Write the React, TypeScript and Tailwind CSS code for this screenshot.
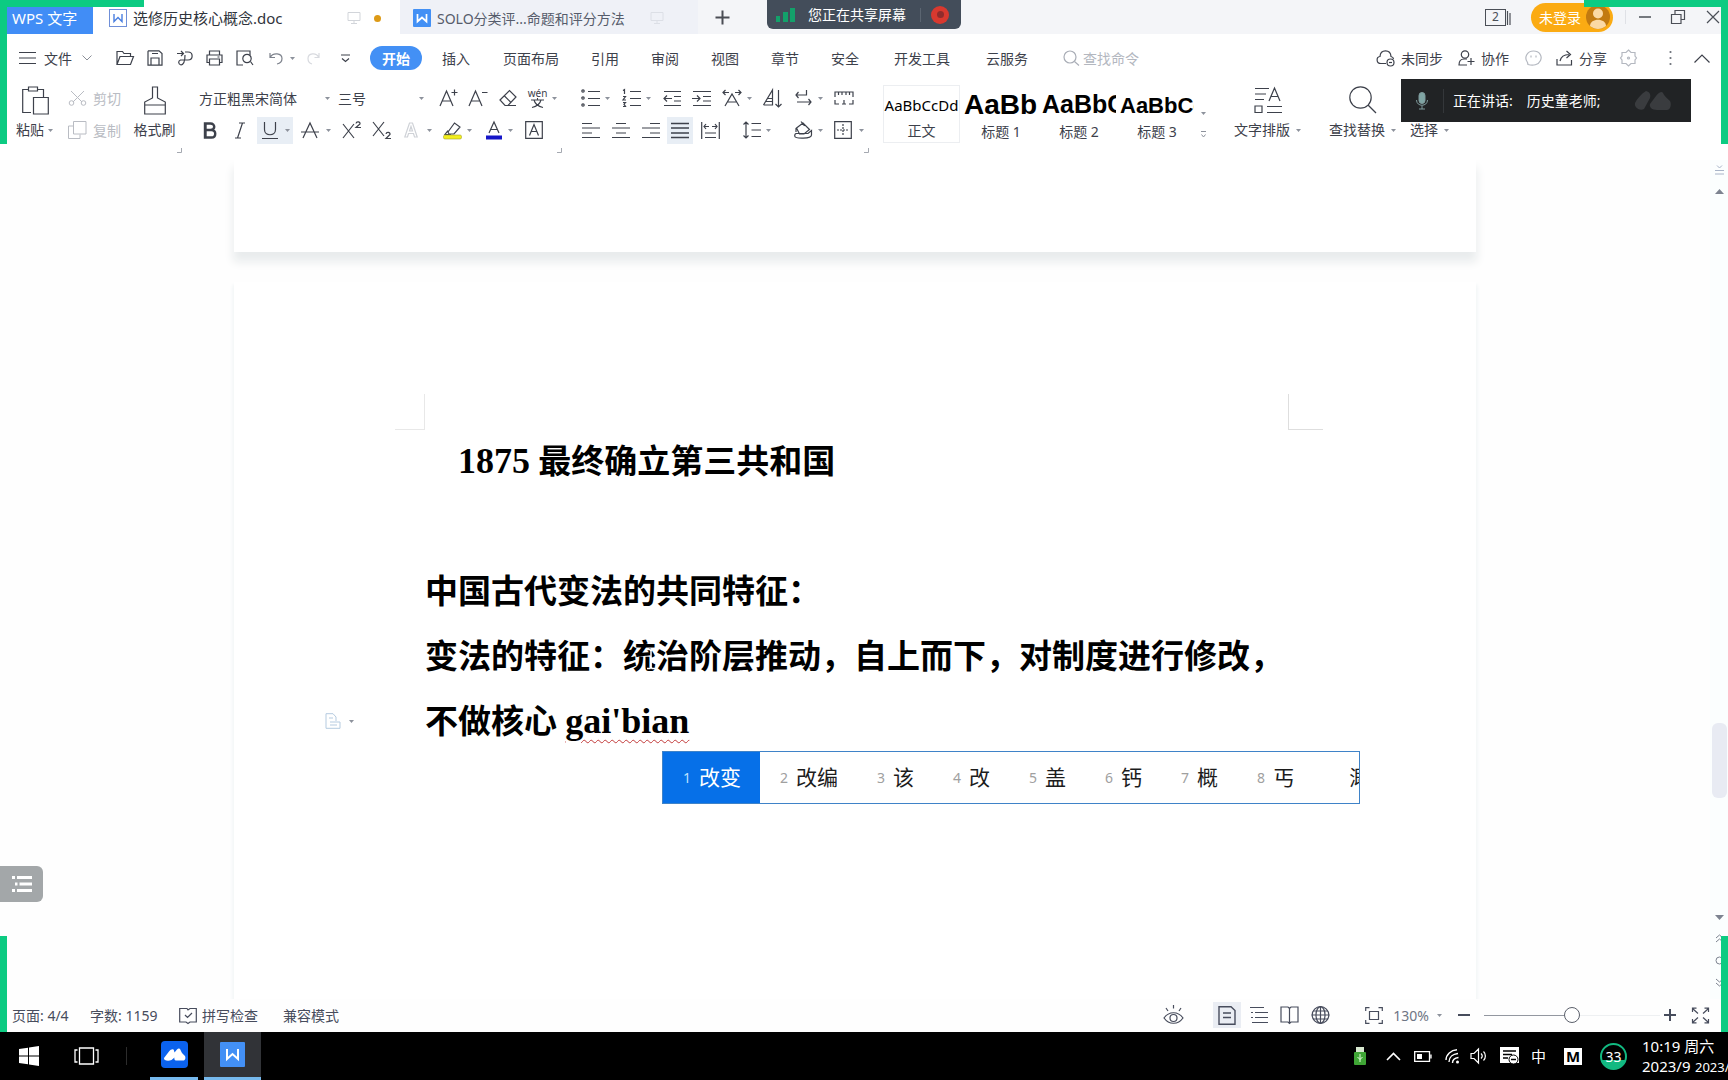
import React from "react";

const UI = "font-['Noto_Sans','Noto_Sans_CJK_SC',sans-serif]";

type IconProps = {
  w: number;
  h?: number;
  d?: string;
  sw?: number;
  fill?: string;
  className?: string;
  children?: React.ReactNode;
};

function Icon({ w, h = 20, d, sw = 1.2, fill = "none", className = "", children }: IconProps) {
  return (
    <svg
      width={w}
      height={h}
      viewBox={`0 0 ${w} ${h}`}
      fill={fill}
      stroke="currentColor"
      strokeWidth={sw}
      className={`block shrink-0 overflow-visible ${className}`}
      aria-hidden="true"
    >
      {d && <path d={d} />}
      {children}
    </svg>
  );
}

function Caret({ className = "" }: { className?: string }) {
  return (
    <svg width="5" height="3" viewBox="0 0 5 3" className={`block shrink-0 text-[#8d929c] ${className}`} aria-hidden="true">
      <path d="M0 0H5L2.500 3Z" fill="currentColor" />
    </svg>
  );
}

type ToolProps = { label: string; className?: string; caret?: string; children: React.ReactNode };

function Tool({ label, className = "", caret, children }: ToolProps) {
  return (
    <button type="button" aria-label={label} className={`flex shrink-0 items-center ${className}`}>
      {children}
      {caret && <Caret className={caret} />}
    </button>
  );
}

function WLogo({ className = "" }: { className?: string }) {
  return (
    <svg width="18" height="18" viewBox="0 0 18 18" className={`block shrink-0 ${className}`} aria-hidden="true">
      <rect width="18" height="18" rx="1" fill="#4390f5" />
      <path d="M4.500 5V12.500L9 8.500L13.500 12.500V5" fill="none" stroke="#fff" strokeWidth="1.700" />
    </svg>
  );
}

function Monitor({ className = "" }: { className?: string }) {
  return <Icon w={14} h={14} className={className} d="M1 1.500H13V9.500H1ZM7 9.500V12.500M4 12.500H10" sw={1} />;
}

function TitleBar() {
  return (
    <div className="relative flex h-[34px] items-center justify-between bg-[#f4f5f8]">
      <div className="flex h-full items-center">
        <button type="button" className="flex h-full w-[93px] items-center bg-[#418df6] pt-0.5 pl-3 text-[15px] text-white">
          WPS 文字
        </button>
        <div className="flex h-full w-[307px] items-center bg-white pt-0.5 pl-4">
          <Icon w={18} h={18} className="text-[#6f8fd8]" sw={1}>
            <rect x="0.500" y="0.500" width="17" height="17" />
            <path d="M5 5V12.500L9 8.500L13 12.500V5" stroke="#4a7fe0" strokeWidth="1.400" />
          </Icon>
          <span className="ml-1.5 w-[214px] text-[15px] text-[#30343c]">选修历史核心概念.doc</span>
          <Monitor className="text-[#d2d5da]" />
          <span className="ml-[13px] size-[7px] rounded-full bg-[#dd9a16]" />
        </div>
        <div className="flex h-full w-[298px] items-center bg-[#eff1f7] pt-0.5 pl-[13px]">
          <WLogo />
          <span className="ml-1.5 w-[213px] text-[14px] text-[#565c6b]">SOLO分类评...命题和评分方法</span>
          <Monitor className="text-[#dcdfe6]" />
        </div>
        <button type="button" aria-label="新建" className="ml-[17px]">
          <Icon w={15} h={15} d="M7.500 0.500V14.500M0.500 7.500H14.500" sw={2} className="text-[#4a4d54]" />
        </button>
      </div>

      <div className="absolute top-0 left-1/2 flex h-[29px] w-[194px] -translate-x-1/2 items-center rounded-b-md bg-[#434d5a] pl-[9px]">
        <Icon w={20} h={16} sw={0} className="text-[#13a06a]">
          <rect x="0" y="9" width="4" height="6" fill="currentColor" />
          <rect x="7" y="5" width="5" height="10" fill="currentColor" />
          <rect x="14" y="1" width="5" height="14" fill="currentColor" />
        </Icon>
        <span className="ml-3 text-[14px] text-white">您正在共享屏幕</span>
        <span className="ml-3.5 h-3.5 w-px bg-[#5b6571]" />
        <span className="ml-2.5 flex size-[18px] items-center justify-center rounded-full bg-[#d8392f]">
          <span className="size-[7px] rounded-sm bg-[#8f2c2c]" />
        </span>
      </div>

      <div className="flex items-center pr-2 text-[#4b4f57]">
        <button type="button" aria-label="窗口数 2" className="flex items-center">
          <span className="flex h-[17px] w-[21px] items-center justify-center border border-[#4b4f57] text-[12px] leading-none">2</span>
          <Icon w={5} h={17} d="M1.500 2V16M4 4V16" sw={1.2} />
        </button>
        <button type="button" className="ml-5 flex h-[29px] w-[82px] items-center justify-between rounded-full bg-[#fbab13] pr-0.5 pl-2 text-[14px] text-white">
          未登录
          <Icon w={26} h={26} sw={0}>
            <circle cx="13" cy="13" r="12" fill="#c27a10" />
            <circle cx="13" cy="9.500" r="5" fill="#fbd9a4" />
            <path d="M5 22C5 13.500 21 13.500 21 22C16 26 10 26 5 22Z" fill="#fbd9a4" />
          </Icon>
        </button>
        <span className="ml-3 h-3.5 w-px bg-[#dfe1e6]" />
        <button type="button" aria-label="最小化" className="ml-[13px]">
          <Icon w={12} h={14} d="M0 7H12" sw={1.5} />
        </button>
        <button type="button" aria-label="还原" className="ml-5">
          <Icon w={14} h={14} d="M0.500 4.500H10V13.500H0.500ZM4 4.500V0.500H13.500V9.500H10" />
        </button>
        <button type="button" aria-label="关闭" className="ml-[21px]">
          <Icon w={14} h={14} d="M1 1L13 13M13 1L1 13" />
        </button>
      </div>
    </div>
  );
}

const TABS: [string, string][] = [
  ["插入", "ml-5"],
  ["页面布局", "ml-[33px]"],
  ["引用", "ml-8"],
  ["审阅", "ml-8"],
  ["视图", "ml-8"],
  ["章节", "ml-8"],
  ["安全", "ml-8"],
  ["开发工具", "ml-[35px]"],
  ["云服务", "ml-9"],
];

function MenuRow() {
  return (
    <nav className="flex h-12 items-center justify-between bg-white pr-[18px] pl-[19px] text-[14px] text-[#3d414b]">
      <div className="flex items-center">
        <button type="button" className="flex items-center">
          <Icon w={17} h={14} d="M0 1.500H17M0 7H17M0 12.500H17" />
          <span className="mr-2.5 ml-2">文件</span>
          <Icon w={10} h={6} d="M0.500 0.500L5 5L9.500 0.500" sw={1} className="text-[#8b8f98]" />
        </button>
        <Tool label="打开" className="ml-6">
          <Icon w={18} h={16} d="M1 14.500V1.500H6.500L8 3.500H14.500V6M1 14.500L4 6.500H17.500L14.500 14.500H1Z" />
        </Tool>
        <Tool label="保存" className="ml-[13px]">
          <Icon w={16} h={16} d="M1.500 0.800H12L15 3.500V15.200H1V1.500ZM4 15V8H12V15M5 3.500H11" />
        </Tool>
        <Tool label="输出为PDF" className="ml-3.5">
          <Icon w={16} h={16} d="M0 3.500H6M4 1L6.500 3.500L4 6M8 2H11C16.500 2 16.500 10 11 10H3.500C1 11 1 14 4 15C7 14.500 8 12 8 5" />
        </Tool>
        <Tool label="打印" className="ml-[13px]">
          <Icon w={17} h={16} d="M3.500 5V1H13.500V5M3.500 12.500H1V5H16V12.500H13.500M3.500 9H13.500V15H3.500ZM11.500 7H13.500" />
        </Tool>
        <Tool label="打印预览" className="ml-[13px]">
          <Icon w={18} h={16} d="M7 15H1V1H14V5M14.500 11.500L17 15">
            <circle cx="11" cy="8.500" r="4.200" />
          </Icon>
        </Tool>
        <Tool label="撤销" className="ml-[15px] text-[#7d828c]" caret="ml-[7px]">
          <Icon w={14} h={14} d="M1 2V6.500H6M1 6.500C4 1 13 2 13 7.500C13 10.500 10.500 12.500 8 13" />
        </Tool>
        <Tool label="恢复" className="ml-3 text-[#d8dadf]">
          <Icon w={13} h={14} d="M12 2V6.500H7.500M12 6.500C9 1 1 2 1 7.500C1 10.500 3 12.500 5 13" />
        </Tool>
        <Tool label="更多" className="ml-[21px]">
          <Icon w={9} h={9} d="M0 1H9M1 4.500L4.500 7.500L8 4.500" />
        </Tool>
        <button type="button" className="ml-5 flex h-6 w-[52px] items-center justify-center rounded-full bg-[#4390f5] font-bold text-white">
          开始
        </button>
        {TABS.map(([t, m]) => (
          <button key={t} type="button" className={`whitespace-nowrap ${m}`}>
            {t}
          </button>
        ))}
        <label className="ml-[35px] flex items-center text-[#a9adb6]">
          <Icon w={17} h={16} d="M11.500 11.500L16 15.500">
            <circle cx="7" cy="7" r="6" />
          </Icon>
          <input aria-label="查找命令" placeholder="查找命令" className="ml-[3px] w-20 bg-transparent outline-none placeholder:text-[#b3b7bf]" />
        </label>
      </div>
      <div className="flex items-center">
        <button type="button" className="flex items-center gap-1.5">
          <Icon w={19} h={18} d="M10 14.500H5C0 14.500 0 8 4 7.500C4.500 0 14.500 0 15 7.500C16.500 8 17.500 9 17.500 10">
            <circle cx="14.500" cy="13.500" r="3.500" />
            <path d="M13 13.500H16" />
          </Icon>
          未同步
        </button>
        <button type="button" className="ml-[15px] flex items-center gap-1.5">
          <Icon w={17} h={16} d="M9 15H1C1 11 3 9 6 9H9M9.500 11.500H16.500M13 8V15">
            <circle cx="7" cy="4.500" r="3.700" />
          </Icon>
          协作
        </button>
        <Tool label="反馈" className="ml-4 text-[#b4b8c0]">
          <Icon w={17} h={17} d="M3 14.500L2.500 12.500C-1.500 7 2.500 1 8.500 1C14.500 1 17.500 6 15.500 10.500C13.500 15 8 16 3 14.500ZM6 5.500V7.500M11 5.500V7.500" />
        </Tool>
        <button type="button" className="ml-3.5 flex items-center gap-1.5">
          <Icon w={17} h={16} d="M1 9V15H15.500V10M4 11C5 6.500 8 4.500 13 4.500M10.500 1L14.500 4.500L10.500 8" />
          分享
        </button>
        <Tool label="设置" className="ml-[13px] text-[#b4b8c0]">
          <Icon w={17} h={18} d="M8.500 1L11 3.500L15 3.500L15 7L16.500 9L15 11L15 14.500L11 14.500L8.500 17L6 14.500L2 14.500L2 11L0.500 9L2 7L2 3.500L6 3.500Z">
            <circle cx="8.500" cy="9" r="1" />
          </Icon>
        </Tool>
        <Tool label="更多选项" className="ml-8 text-[#6b6f78]">
          <Icon w={3} h={16} sw={0}>
            <circle cx="1.500" cy="2" r="1.100" fill="currentColor" />
            <circle cx="1.500" cy="8" r="1.100" fill="currentColor" />
            <circle cx="1.500" cy="14" r="1.100" fill="currentColor" />
          </Icon>
        </Tool>
        <Tool label="收起功能区" className="ml-[22px]">
          <Icon w={16} h={9} d="M0.500 8.500L8 1L15.500 8.500" />
        </Tool>
      </div>
    </nav>
  );
}

const row = "flex h-8 items-center";
const lit = "h-[27px] bg-[#e8eef5]";

function FontGroup() {
  return (
    <div className="ml-[23px] w-[382px] shrink-0">
      <div className={row}>
        <div className="relative flex items-center">
          <select aria-label="字体" className="w-[134px] appearance-none bg-transparent">
            <option>方正粗黑宋简体</option>
          </select>
          <Caret className="pointer-events-none absolute right-[3px]" />
        </div>
        <div className="relative ml-[5px] flex items-center">
          <select aria-label="字号" className="w-[88px] appearance-none bg-transparent">
            <option>三号</option>
          </select>
          <Caret className="pointer-events-none absolute right-0.5" />
        </div>
        <Tool label="增大字号" className="ml-[13px]">
          <Icon w={19} h={18} d="M1 17L7.500 2L14 17M3.300 12H11.700M12.500 3.500H18.500M15.500 0.500V6.500" />
        </Tool>
        <Tool label="减小字号" className="ml-2.5">
          <Icon w={20} h={18} d="M1 17L7.500 2L14 17M3.300 12H11.700M14 3.500H19.500" />
        </Tool>
        <Tool label="清除格式" className="ml-[11px]">
          <Icon w={18} h={18} d="M1 11L10.500 1.500L17 8L9 16.500H6ZM5 6.500L12 13.500M9 16.500H17" />
        </Tool>
        <Tool label="拼音指南" className="ml-[11px]" caret="ml-[5px]">
          <span className="flex w-[19px] flex-col items-center">
            <span className="text-[10px] leading-[9px]">wén</span>
            <Icon w={13} h={10} d="M0 2H13M6.500 0V2M10 2C9 6 5.500 8.500 1 9.500M3 2C4 6 7.500 8.500 12 9.500" sw={1.1} />
          </span>
        </Tool>
      </div>
      <div className={row}>
        <Tool label="加粗" className="ml-1">
          <Icon w={14} h={17} d="M2 1.500H7.500C12.500 1.500 12.500 8 7.500 8H2H8.500C13.500 8 13.500 15.500 8.500 15.500H2ZM2.500 1V16" sw={2.4} />
        </Tool>
        <Tool label="倾斜" className="ml-[17px]">
          <Icon w={12} h={17} d="M5 1H11M1 16H7M8.500 1L3.500 16" />
        </Tool>
        <Tool label="下划线" className={`ml-[11px] w-9 pl-1 ${lit}`} caret="ml-1.5">
          <Icon w={18} h={19} d="M3.500 1V8.500C3.500 15.500 14.500 15.500 14.500 8.500V1M1 17.500H17" />
        </Tool>
        <Tool label="删除线" className="ml-2" caret="ml-[7px]">
          <Icon w={18} h={17} d="M2 16L9 1L16 16M0 10H18" />
        </Tool>
        <Tool label="上标" className="ml-[11px]">
          <Icon w={20} h={18} d="M1 3L12 17M12 3L1 17M14 2.500C14.500 0 18.500 0.500 18 3L14 6.500H19" />
        </Tool>
        <Tool label="下标" className="ml-2.5">
          <Icon w={20} h={18} d="M1 1L12 15M12 1L1 15M14 13C14.500 10.500 18.500 11 18 13.500L14 17.500H19" />
        </Tool>
        <Tool label="文字效果" className="ml-3 text-[#cfd2d7]" caret="ml-[9px]">
          <Icon w={14} h={16}>
            <path d="M0.800 15L5.500 1H8.500L13.200 15H10.500L9.500 11.500H4.500L3.500 15ZM5.500 9H8.500L7 4.500Z" />
          </Icon>
        </Tool>
        <Tool label="突出显示" className="ml-[11px]" caret="ml-1">
          <Icon w={20} h={19} d="M5 11L11.500 2L17 6L11 13H6ZM5 9.500L2 13.500H8">
            <rect x="0.500" y="14" width="18" height="4" rx="1.500" fill="#f2ee1c" stroke="#a5a22a" strokeWidth="0.600" />
          </Icon>
        </Tool>
        <Tool label="字体颜色" className="ml-3.5" caret="ml-1.5">
          <Icon w={16} h={19} d="M3 12L8 1L13 12M4.800 8.500H11.200">
            <rect x="0" y="14.500" width="16" height="4" fill="#1616c8" stroke="none" />
          </Icon>
        </Tool>
        <Tool label="字符边框" className="ml-3">
          <Icon w={18} h={18} d="M0.700 0.700H17.300V17.300H0.700ZM4.500 14.500L9 3.500L13.500 14.500M6 10.500H12" />
        </Tool>
      </div>
    </div>
  );
}

function ParagraphGroup() {
  return (
    <div className="w-[302px] shrink-0">
      <div className={row}>
        <Tool label="项目符号" caret="ml-[5px]">
          <Icon w={19} h={18} d="M7 2.500H19M7 9.500H19M7 16.500H19">
            <circle cx="2" cy="2" r="1.200" />
            <circle cx="2" cy="9" r="1.200" />
            <circle cx="2" cy="16" r="1.200" />
          </Icon>
        </Tool>
        <Tool label="编号" className="ml-3" caret="ml-[5px]">
          <Icon w={19} h={18} d="M8 2.500H19M8 9.500H19M8 16.500H19M1 1.500L2.500 0.500V5M1 7.500H3.500L1 11H4M1 13.500H3.500L2 15.200L3.500 17.500H1" />
        </Tool>
        <Tool label="减少缩进" className="ml-3">
          <Icon w={19} h={17} d="M1 1.500H18M11 6.500H18M11 11H18M1 15.500H18M9 8.500H1.500M4 5.500L1 8.500L4 11.500" />
        </Tool>
        <Tool label="增加缩进" className="ml-2.5">
          <Icon w={20} h={17} d="M1 1.500H19M11 6.500H19M11 11H19M1 15.500H19M0 8.500H7.500M5 5.500L8 8.500L5 11.500" />
        </Tool>
        <Tool label="字符缩放" className="ml-2.5" caret="ml-[5px]">
          <Icon w={20} h={18} d="M3 17L10 5L17 17M5.500 13H14.500M1 3.500H7M3.500 1L1 3.500L3.500 6M13 3.500H19M16.500 1L19 3.500L16.500 6" />
        </Tool>
        <Tool label="排序" className="ml-[11px]">
          <Icon w={19} h={19} d="M0.500 16L9.500 1V16H0.500M4.500 9.500H9.500M3 12.500H9.500M15.500 1V18M12.500 15L15.500 18L18.500 15" />
        </Tool>
        <Tool label="显示编辑标记" className="ml-[13px]" caret="ml-1.5">
          <Icon w={17} h={18} d="M11.500 1V6H1M3.500 3L1 6L3.500 9M2 13H16M13.500 10L16 13L13.500 16" />
        </Tool>
        <Tool label="标尺" className="ml-[11px]">
          <Icon w={20} h={14} d="M1 6V1H19V6M4.500 1V4M8 1V4M12 1V4M15.500 1V4M1 9V13H5M8 13H12M10 9V13M15 13H19V9" />
        </Tool>
      </div>
      <div className={row}>
        <Tool label="左对齐" className="ml-px">
          <Icon w={18} h={17} d="M0 1.500H10M0 6H18M0 11H10M0 15.500H18" />
        </Tool>
        <Tool label="居中" className="ml-3">
          <Icon w={18} h={17} d="M4 1.500H14M0 6H18M4 11H14M0 15.500H18" />
        </Tool>
        <Tool label="右对齐" className="ml-3">
          <Icon w={18} h={17} d="M8 1.500H18M0 6H18M8 11H18M0 15.500H18" />
        </Tool>
        <Tool label="两端对齐" className={`ml-[7px] w-[26px] justify-center ${lit}`}>
          <Icon w={18} h={17} d="M0 1.500H18M0 6H18M0 11H18M0 15.500H18" sw={1.5} />
        </Tool>
        <Tool label="分散对齐" className="ml-2">
          <Icon w={19} h={17} d="M0.700 0V17M18.300 0V17M4 11H15M4 15.500H15M3 4.500H8M5 2L3 4.500L5 7M11 4.500H16M14 2L16 4.500L14 7" />
        </Tool>
        <Tool label="行距" className="ml-[23px]" caret="ml-[5px]">
          <Icon w={18} h={18} d="M3 1V17M0.500 3.500L3 1L5.500 3.500M0.500 14.500L3 17L5.500 14.500M8.500 2.500H18M8.500 9H18M8.500 15.500H18" />
        </Tool>
        <Tool label="底纹颜色" className="ml-[23px]" caret="ml-1.5">
          <Icon w={18} h={18} d="M2.500 7L9 2L15.500 8.500L10 13H5.500ZM7 0.500L10.500 5M2 7L2 11M1.500 12.500H14L17.500 9.500V14C17.500 18 1 18 0.700 15C0.700 13.500 1 12.500 2.500 12.500" />
        </Tool>
        <Tool label="边框" className="ml-[11px]" caret="ml-[7px]">
          <Icon w={18} h={18} d="M0.700 0.700H17.300V17.300H0.700Z">
            <path d="M9 3V15M3 9H15" strokeDasharray="2 1" />
          </Icon>
        </Tool>
      </div>
    </div>
  );
}

function StyleCard({ sample, name, sampleClass, className }: { sample: string; name: string; sampleClass: string; className: string }) {
  return (
    <button type="button" className={`flex h-[58px] shrink-0 flex-col items-center justify-end ${className}`}>
      <span className={`flex h-9 w-full items-center overflow-hidden pt-1 whitespace-nowrap text-black ${sampleClass}`}>{sample}</span>
      <span className="leading-[22px]">{name}</span>
    </button>
  );
}

function Launcher({ className }: { className: string }) {
  return <Icon w={5} h={5} d="M4.500 0V4.500H0" sw={1} className={`text-[#a5a9b1] ${className}`} />;
}

function Ribbon() {
  return (
    <div className="bg-white text-[14px] text-[#3d414b]">
      <div className="flex h-16 pl-4">
        <button type="button" className="flex w-[38px] shrink-0 flex-col justify-between pt-1 pb-1">
          <Icon w={27} h={29} className="ml-1.5" d="M6 3.500H0.700V26.500H9M20 3.500H21.500V11M6.500 1H15.500V5H6.500ZM15.500 3.500H21M11.500 11.500H26.300V28H11.500Z" />
          <span className="flex items-center gap-1 leading-6">
            粘贴
            <Caret />
          </span>
        </button>
        <div className="ml-[14px] w-[53px] shrink-0 whitespace-nowrap text-[#b9bcc3]">
          <button type="button" className="flex h-8 items-center gap-1.5">
            <Icon w={19} h={16} d="M3 1L14 12M16 1L5 12" sw={1}>
              <circle cx="3.500" cy="13" r="2.300" />
              <circle cx="15.500" cy="13" r="2.300" />
            </Icon>
            剪切
          </button>
          <button type="button" className="flex h-8 items-center gap-1.5">
            <Icon w={19} h={18} d="M5.500 0.500H18V13H5.500ZM5 5H0.500V17.500H12V13.500" sw={1} />
            复制
          </button>
        </div>
        <button type="button" className="ml-3 flex w-[43px] shrink-0 flex-col items-center justify-between pt-1 pb-1">
          <Icon w={22} h={29} d="M8.500 12V1H13.500V12L21.300 16V28H0.700V16ZM0.700 19H21.300" />
          <span className="whitespace-nowrap leading-6">格式刷</span>
        </button>
        <FontGroup />
        <ParagraphGroup />
        <div className="flex shrink-0 items-center">
          <StyleCard sample="AaBbCcDd" name="正文" sampleClass="justify-center text-[15px]" className="w-[77px] border border-[#eceef1]" />
          <StyleCard sample="AaBb" name="标题 1" sampleClass="font-['Liberation_Sans',sans-serif] text-[28px] font-bold" className="ml-1 w-[74px]" />
          <StyleCard sample="AaBbC" name="标题 2" sampleClass="font-['Liberation_Sans',sans-serif] text-[25px] font-bold" className="ml-1 w-[74px]" />
          <StyleCard sample="AaBbCc" name="标题 3" sampleClass="font-['Liberation_Sans',sans-serif] text-[22px] font-bold" className="ml-1 w-[74px]" />
          <div className="ml-[7px] flex h-full flex-col justify-end gap-4 pb-2">
            <Caret />
            <Icon w={5} h={7} d="M0 0.500H5M0.500 3.500L2.500 6L4.500 3.500" sw={1} className="text-[#8d929c]" />
          </div>
        </div>
        <button type="button" className="ml-7 flex w-[69px] shrink-0 flex-col justify-between pt-1 pb-1">
          <Icon w={28} h={28} className="ml-5" d="M1 2.500H15M1 8H12M1 13.500H10M15 15L20.500 2L26 15M17 10.500H24M1 20H8V26.500H1ZM13 20.500H28M13 26.500H28" />
          <span className="flex items-center gap-1.5 whitespace-nowrap leading-6">
            文字排版
            <Caret />
          </span>
        </button>
        <button type="button" className="ml-[26px] flex w-[69px] shrink-0 flex-col justify-between pt-1 pb-1">
          <Icon w={28} h={28} className="ml-5" d="M19 19L27 27">
            <circle cx="11.500" cy="11.500" r="10.700" />
          </Icon>
          <span className="flex items-center gap-1.5 whitespace-nowrap leading-6">
            查找替换
            <Caret />
          </span>
        </button>
        <button type="button" className="ml-3 flex shrink-0 flex-col justify-end pb-1">
          <span className="flex items-center gap-1.5 whitespace-nowrap leading-6">
            选择
            <Caret />
          </span>
        </button>
      </div>
      <div className="flex h-3.5 pt-0.5">
        <Launcher className="ml-[177px]" />
        <Launcher className="ml-[375px]" />
        <Launcher className="ml-[302px]" />
      </div>
    </div>
  );
}

function SpeakerBar() {
  return (
    <div className="absolute top-[79px] right-[37px] flex h-[43px] w-[290px] items-center bg-[#212325] pr-4 pl-3.5 text-[14px] text-white">
      <Icon w={14} h={18} sw={1} className="text-[#7f9a9c]">
        <rect x="4" y="0.500" width="6" height="11" rx="3" fill="#7fa5a4" />
        <path d="M1.500 8C1.500 15 12.500 15 12.500 8M7 13.500V17M4 17H10" />
      </Icon>
      <span className="ml-3.5 h-6 w-px bg-[#34373a]" />
      <span className="ml-[9px]">正在讲话:</span>
      <span className="ml-3.5">历史董老师;</span>
      <Icon w={42} h={22} sw={0} className="ml-auto text-[#3a3c3f]">
        <path d="M2 13C4 9 8 4 13 1C17 2 18 5 17 8L11 19C7 21 1 18 2 13ZM17 14L23 6C26 2 29 1 30 3C31 6 34 8 37 11C39 15 37 20 34 20H24C19 20 16 17 17 14Z" fill="currentColor" />
      </Icon>
    </div>
  );
}

const CANDIDATES = ["改变", "改编", "该", "改", "盖", "钙", "概", "丐"];

function CandidateBar() {
  return (
    <ol className={`absolute top-full left-[237px] -mt-1 flex h-[53px] w-[698px] items-stretch overflow-hidden border border-[#3f83c8] bg-white text-[21px] font-normal text-[#1c1c1c] ${UI}`}>
      {CANDIDATES.map((c, i) => (
        <li
          key={c}
          className={`flex shrink-0 items-center gap-2 pr-[19px] pl-5 leading-none ${i === 0 ? "bg-[#0670e8] text-white" : ""}`}
        >
          <span className={`text-[14px] ${i === 0 ? "text-[#bfe0ff]" : "text-[#a0a0a0]"}`}>{i + 1}</span>
          <span>{c}</span>
        </li>
      ))}
      <li className="flex shrink-0 items-center pl-9 leading-none">溉</li>
    </ol>
  );
}

function DocumentArea() {
  return (
    <main className="relative flex min-h-0 flex-1 bg-[#fefefe]">
      <div className="min-w-0 flex-1 overflow-hidden">
        <div className="mx-auto h-[92px] w-[1242px] bg-white shadow-[0_9px_9px_1px_#e9eced]" />
        <article className="mx-auto mt-[30px] h-[1600px] w-[1242px] bg-white pt-28 shadow-[0_4px_4px_1px_#eef3f4]">
          <div className="mr-[153px] ml-[161px] flex justify-between">
            <span className="h-9 w-[30px] border-r border-b border-[#e8e8e8]" />
            <span className="h-9 w-[35px] border-b border-l border-[#dedede]" />
          </div>
          <div className="mr-[150px] ml-[191px] font-['Liberation_Serif','Noto_Sans_CJK_SC',serif] text-[33px] leading-[65px] font-bold whitespace-nowrap text-black">
            <p className="pl-[33px]">
              <span className="text-[36px] leading-none">1875</span> 最终确立第三共和国
            </p>
            <p>&nbsp;</p>
            <p>中国古代变法的共同特征：</p>
            <div className="relative">
              <p>变法的特征：统治阶层推动，自上而下，对制度进行修改，</p>
              <Icon w={8} h={20} className="absolute top-6 left-[222px] text-white" sw={1.5} d="M0 0.500H3L4 2L5 0.500H8M4 2V18M0 19.500H3L4 18L5 19.500H8" />
            </div>
            <div className="relative">
              <button type="button" aria-label="段落布局" className="absolute top-[23px] -left-[100px] flex items-center text-[#b5cbe0]">
                <Icon w={16} h={16} d="M1 0.700H8L11 4V8M1 0.700V15.300H15V9H5M4 5H8M5 12H12" sw={1} />
                <Caret className="ml-2" />
              </button>
              <p>
                不做核心{" "}
                <span className="text-[36px] leading-none underline decoration-[#c23a3a] decoration-wavy decoration-1 underline-offset-[6px]">gai'bian</span>
              </p>
              <CandidateBar />
            </div>
          </div>
        </article>
      </div>
      <div className="flex w-[18px] shrink-0 flex-col items-center bg-[#fbfefe] pt-[5px] text-[#7d8390]">
        <Icon w={9} h={10} d="M2 0.500L4.500 3L7 0.500M0 5.500H9M0 9H9" sw={1} className="text-[#a9b4c8]" />
        <Icon w={9} h={5} sw={0} className="mt-3.5" d="M0 5L4.500 0L9 5Z" fill="currentColor" />
        <div className="mt-[529px] h-[75px] w-[15px] rounded-md bg-[#e8ebf3]" />
        <Icon w={9} h={5} sw={0} className="mt-auto" d="M0 0L4.500 5L9 0Z" fill="currentColor" />
        <Icon w={9} h={8} className="mt-3.5" sw={1} d="M1 4L4.500 1L8 4M1 8L4.500 5L8 8" />
        <Icon w={9} h={9} className="mt-3.5" sw={1}>
          <circle cx="4.500" cy="4.500" r="3.500" />
        </Icon>
        <Icon w={9} h={8} className="mt-3.5 mb-3" sw={1} d="M1 0L4.500 3L8 0M1 4L4.500 7L8 4" />
      </div>
      <button type="button" aria-label="章节导航" className="absolute bottom-[97px] left-0 flex h-9 w-[43px] items-center rounded-r-md bg-[#a3a7a9] pl-3 text-white">
        <Icon w={20} h={18} d="M0 2.500H3M5 2.500H20M3 9H5.500M7.500 9H20M0 15.500H3M5 15.500H20" sw={3} />
      </button>
    </main>
  );
}

function StatusBar() {
  return (
    <footer className="flex h-[33px] shrink-0 items-center justify-between bg-[#fefefe] pr-[18px] pb-px pl-3 text-[14px] text-[#474c5c]">
      <div className="flex items-center">
        <span className="w-[78px]">页面: 4/4</span>
        <span className="w-[89px]">字数: 1159</span>
        <button type="button" className="flex items-center gap-[5px]">
          <Icon w={18} h={17} d="M8 1.500H0.700V15H7L9 16.500L11 15H17.300V1.500H11L9 3ZM6 8L8.500 10.500L13 6" />
          拼写检查
        </button>
        <span className="ml-[25px]">兼容模式</span>
      </div>
      <div className="flex items-center">
        <Tool label="护眼模式">
          <Icon w={21} h={20} d="M1 13C6 6 15 6 20 13C15 20 6 20 1 13ZM10.500 0V3.500M3 3L5 6M18 3L16 6">
            <circle cx="10.500" cy="13" r="3.500" />
          </Icon>
        </Tool>
        <Tool label="页面视图" className="ml-[29px] h-[26px] w-7 justify-center bg-[#eaedf3]">
          <Icon w={18} h={19} d="M1 0.700H13L17 4.500V18.300H1ZM5 7H13M5 11.500H13" sw={1.4} />
        </Tool>
        <Tool label="大纲" className="ml-[9px]">
          <Icon w={18} h={18} d="M0 1.500H14M5 6.500H18M5 11.500H18M2 16.500H18M1 6.500H3M1 11.500H3" />
        </Tool>
        <Tool label="阅读版式" className="ml-3">
          <Icon w={19} h={18} d="M1 1H8L9.500 2.500L11 1H18V16H11L9.500 17.500L8 16H1ZM9.500 2.500V17" />
        </Tool>
        <Tool label="Web版式" className="ml-3">
          <Icon w={19} h={18} d="M0.500 9H18.500M2 5H17M2 13H17M9.500 0.500V17.500">
            <circle cx="9.500" cy="9" r="8.300" />
            <ellipse cx="9.500" cy="9" rx="4.500" ry="8.300" />
          </Icon>
        </Tool>
        <Tool label="适合页面" className="ml-[35px]">
          <Icon w={18} h={17} d="M0.700 4V0.700H4.500M13.500 0.700H17.300V4M17.300 13V16.300H13.500M4.500 16.300H0.700V13M4.500 4.500H13.500V12.500H4.500Z" />
        </Tool>
        <button type="button" className="ml-2.5 flex items-center gap-2 text-[#6f7584]">
          130%
          <Caret />
        </button>
        <Tool label="缩小" className="ml-4">
          <Icon w={12} h={12} d="M0 6H12" sw={2} />
        </Tool>
        <input
          type="range"
          aria-label="显示比例"
          min={0}
          max={100}
          defaultValue={50}
          className="ml-[14px] h-4 w-[176px] appearance-none bg-[linear-gradient(to_right,#9397a0_50%,#eef0f2_50%)] bg-[length:100%_1px] bg-center bg-no-repeat [&::-webkit-slider-thumb]:size-4 [&::-webkit-slider-thumb]:appearance-none [&::-webkit-slider-thumb]:rounded-full [&::-webkit-slider-thumb]:border [&::-webkit-slider-thumb]:border-[#5b606b] [&::-webkit-slider-thumb]:bg-white"
        />
        <Tool label="放大" className="ml-1">
          <Icon w={12} h={12} d="M0 6H12M6 0V12" sw={2} />
        </Tool>
        <Tool label="全屏" className="ml-[15px]">
          <Icon w={19} h={17} d="M7 6.500L1.500 1.500M1.500 5V1.200H5.500M12 6.500L17.500 1.500M17.500 5V1.200H13.500M7 10.500L1.500 15.500M1.500 12V15.800H5.500M12 10.500L17.500 15.500M17.500 12V15.800H13.500" />
        </Tool>
      </div>
    </footer>
  );
}

function Taskbar() {
  return (
    <div className="relative flex h-12 shrink-0 items-center justify-between bg-black pl-[19px] text-white">
      <div className="flex h-full items-center">
        <Tool label="开始菜单">
          <Icon w={20} h={20} sw={0} fill="#fff" d="M0 3L9 1.700V9.500H0ZM10 1.500L20 0V9.500H10ZM0 10.500H9V18.300L0 17ZM10 10.500H20V20L10 18.500Z" />
        </Tool>
        <Tool label="任务视图" className="ml-[35px]">
          <Icon w={25} h={18} d="M5.500 1H19.500V17H5.500ZM3.500 3H1V15H3.500M21.500 3H24V15H21.500" sw={1.3} />
        </Tool>
        <span className="ml-[27px] h-[18px] w-px bg-[#2c2c2c]" />
        <button type="button" aria-label="腾讯会议" className="ml-[23px] flex h-full w-12 items-center justify-center border-b-[3px] border-[#76b9ed]">
          <Icon w={27} h={27} sw={0}>
            <rect width="27" height="27" rx="4" fill="#0b62ee" />
            <path d="M3 17L8 10.500C10 8 12.500 7.500 13 9.500L13.500 11.500L16 8.500C17.500 7 19 7.500 19.500 9L21 12L24 15C25 17.500 24 19.500 22 19.500H15C13.500 19.500 13 18 13.500 16.500L10.500 19C7 20.500 2.500 19.500 3 17Z" fill="#fff" />
          </Icon>
        </button>
        <button type="button" aria-label="WPS 文字" className="ml-1.5 flex h-full w-[57px] items-center justify-center border-b-[3px] border-[#76b9ed] bg-[#313337]">
          <Icon w={25} h={25} sw={0}>
            <rect width="25" height="25" rx="1" fill="#4390f5" />
            <path d="M7 7V17L12.500 12L18 17V7" stroke="#fff" strokeWidth="2" />
          </Icon>
        </button>
      </div>
      <div className="flex items-center pr-4">
        <Icon w={12} h={18} sw={0} className="mr-5">
          <rect x="2" y="0" width="8" height="5" fill="#d7e8cf" />
          <rect x="0" y="5" width="12" height="13" rx="1" fill="#3fa535" />
          <path d="M6 7V15M3.500 10L6 12.500L8.500 10" stroke="#e6ffe0" strokeWidth="1" />
        </Icon>
        <Icon w={15} h={9} d="M1 8L7.500 1.500L14 8" sw={1.6} />
        <Icon w={18} h={11} d="M0.700 0.700H15.500V10.300H0.700ZM17 3.500V7.500" sw={1.3} className="ml-[13px]">
          <rect x="3" y="3" width="5" height="5" fill="#fff" stroke="none" />
        </Icon>
        <Icon w={15} h={15} d="M1 11C1 5.500 6 1 12 0.700M4 13C4 8 8 5 13 4.500M7.500 14C7.500 11 10 9 13.500 8.500" sw={1.4} className="ml-[13px]">
          <circle cx="12.500" cy="13" r="1.500" fill="#fff" stroke="none" />
        </Icon>
        <Icon w={19} h={16} d="M1 5.500H4L8.500 1V15L4 10.500H1ZM11 5.500C12.500 7 12.500 9 11 10.500M13.500 3.500C16 6 16 10 13.500 12.500" className="ml-2.5" />
        <Icon w={19} h={18} sw={0} className="ml-[11px]">
          <rect width="19" height="16" fill="#fff" />
          <path d="M3 4H16M3 7.500H12M3 11H8" stroke="#000" strokeWidth="1.400" />
          <circle cx="13.500" cy="12.500" r="4.500" fill="#fff" stroke="#000" strokeWidth="1" />
          <path d="M11 12.500H16" stroke="#000" strokeWidth="1.500" />
        </Icon>
        <span className="ml-3 text-[15px]">中</span>
        <span className="ml-[18px] flex h-[17px] w-[18px] items-center justify-center bg-white text-[15px] leading-none font-bold text-black">M</span>
        <span className="ml-[18px] flex size-[27px] items-center justify-center rounded-full border-2 border-[#12b981] bg-[linear-gradient(to_bottom,#000_66%,#12b981_66%)] text-[14px]">33</span>
        <div className="ml-[15px] w-[70px] text-[15px] leading-5 whitespace-nowrap">
          <div>10:19 周六</div>
          <div>2023/9</div>
        </div>
      </div>
      <div className="absolute right-0 bottom-1 w-[34px] overflow-hidden bg-black pl-px text-[13px] leading-[18px] whitespace-nowrap">2023/</div>
    </div>
  );
}

export default function App() {
  return (
    <div className={`relative flex h-screen flex-col overflow-hidden bg-white ${UI}`}>
      <header className="relative shrink-0">
        <TitleBar />
        <MenuRow />
        <Ribbon />
        <SpeakerBar />
        <div className="pointer-events-none absolute top-0 left-0 h-36 w-36 border-t-[7px] border-[#0ccb82]" />
        <div className="pointer-events-none absolute top-0 left-0 h-36 w-[7px] bg-[#0ccb82]" />
        <div className="pointer-events-none absolute top-0 right-0 h-36 w-36 border-t-[7px] border-r-[7px] border-[#0ccb82]" />
      </header>
      <DocumentArea />
      <StatusBar />
      <Taskbar />
      <div className="pointer-events-none absolute bottom-12 left-0 h-24 w-[7px] bg-[#0ccb82]" />
      <div className="pointer-events-none absolute right-0 bottom-12 h-24 w-[7px] bg-[#0ccb82]" />
    </div>
  );
}
